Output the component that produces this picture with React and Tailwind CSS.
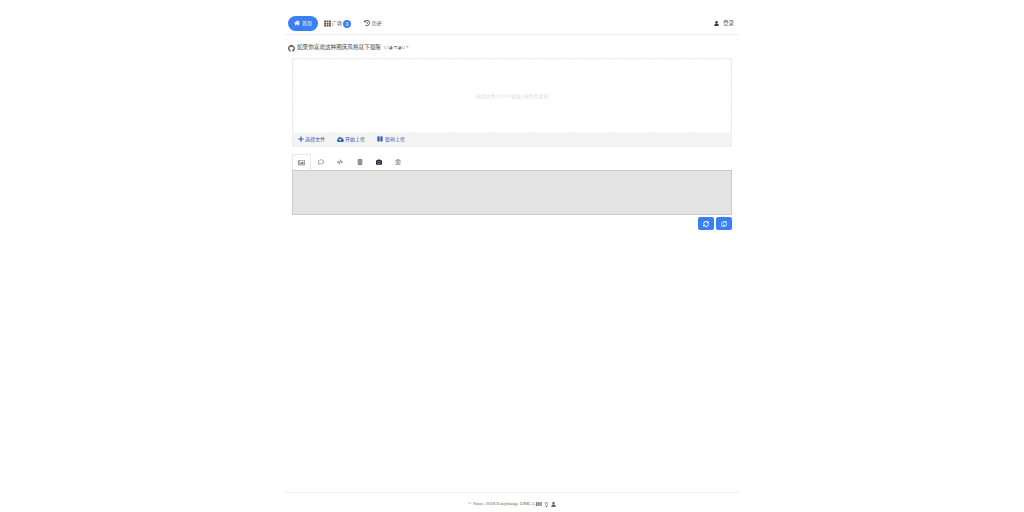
import React from 'react';
import { FaHome, FaTh, FaHistory, FaUser, FaGithub, FaPlus, FaCloudUploadAlt, FaPause, FaRegImage, FaRegComment, FaCode, FaCamera, FaRegTrashAlt, FaTrashAlt, FaSyncAlt, FaRegCopy, FaRegLightbulb, FaRegNewspaper } from 'react-icons/fa';

const tabs = [
  { icon: FaRegComment, color: 'text-gray-500' },
  { icon: FaCode, color: 'text-gray-500' },
  { icon: FaTrashAlt, color: 'text-gray-500' },
  { icon: FaCamera, color: 'text-gray-800' },
  { icon: FaRegTrashAlt, color: 'text-gray-500' },
];

export default function App() {
  return (
    <div className="w-[1024px] h-[512px] bg-white flex flex-col items-center font-['Noto_Sans_CJK_SC','Liberation_Sans',sans-serif] text-[#4a4a4a]">
      <div className="w-[456px] h-[512px] flex flex-col">
        {/* nav */}
        <div className="h-[35px] shrink-0 border-b border-[#f0f0f0] pt-4 px-1 flex items-start justify-between">
          <div className="flex items-center text-[5px] h-[15px]">
            <div className="w-[30px] h-[15px] pb-[1px] rounded-full bg-[#3b7ff5] text-white flex items-center justify-center gap-[2px]">
              <FaHome className="text-[6px]" />
              <span>首页</span>
            </div>
            <div className="ml-[6px] pb-[1px] flex items-center gap-[1px]">
              <FaTh className="text-[7px] text-[#6b5a45]" />
              <span>广场</span>
              <span className="w-[8px] h-[8px] mt-[1px] rounded-full bg-[#3b7ff5] text-white text-[5px] leading-none flex items-center justify-center">6</span>
            </div>
            <div className="ml-[13px] pb-[1px] flex items-center gap-[2px]">
              <FaHistory className="text-[6px] text-[#4a4a4a]" />
              <span>历史</span>
            </div>
          </div>
          <div className="flex items-center gap-[3px] text-[5.5px] h-[15px] mr-[2px]">
            <FaUser className="text-[5px] text-[#363636]" />
            <span className="ml-[1px]">登录</span>
          </div>
        </div>

        {/* notice */}
        <div className="mt-[8px] px-1 h-[10px] flex items-center gap-[2px] text-[5.6px] text-[#4a4a4a] leading-none">
          <FaGithub className="text-[7px]" />
          <span>如果你喜欢这种图床风格就下载喔</span>
          <span className="ml-[1px] text-[#777] font-['DejaVu_Sans',sans-serif] text-[4.5px]">(ﾉ◕ヮ◕)ﾉ*</span>
        </div>

        {/* uploader */}
        <div className="mt-[5px] mx-2 w-[440px] border border-[#ececec] flex flex-col">
          <div className="h-[74px] border border-dashed border-[#f6f6f6] flex items-center justify-center text-[5px] text-[#dcdcdc]">
            选择文件/Ctrl+V粘贴/拖拽至此处
          </div>
          <div className="h-[13px] pb-[1px] bg-[#f3f3f3] flex items-center pl-[5px] text-[5px] text-[#2f5fb3]">
            <div className="flex items-center gap-[1px]">
              <FaPlus className="text-[6px]" />
              <span>选择文件</span>
            </div>
            <div className="ml-[12px] flex items-center gap-[1px]">
              <FaCloudUploadAlt className="text-[7px]" />
              <span>开始上传</span>
            </div>
            <div className="ml-[12px] flex items-center gap-[2px]">
              <FaPause className="text-[6px]" />
              <span>暂停上传</span>
            </div>
          </div>
        </div>

        {/* tabs */}
        <div className="mt-[7px] mx-2 h-[16px] flex items-stretch">
          <div className="w-[19px] border-t border-l border-r border-[#e8e8e8] flex items-center justify-center text-gray-500">
            <FaRegImage className="text-[7px]" />
          </div>
          <div className="flex items-center ml-[7px] gap-[13.3px]">
            {tabs.map((t, i) => {
              const Icon = t.icon;
              return <Icon key={i} className={`text-[6px] ${t.color}`} />;
            })}
          </div>
        </div>

        {/* output */}
        <div className="mx-2 w-[440px] h-[45px] bg-[#e3e3e3] border border-[#c9c9c9]"></div>
        <div className="mx-2 w-[440px] mt-[2px] flex justify-end gap-[2px]">
          <div className="w-[16px] h-[13px] rounded-[2px] bg-[#3b7ff5] flex items-center justify-center text-white">
            <FaSyncAlt className="text-[6px]" />
          </div>
          <div className="w-[16px] h-[13px] rounded-[2px] bg-[#3b7ff5] flex items-center justify-center text-white">
            <FaRegCopy className="text-[6px]" />
          </div>
        </div>

        {/* footer */}
        <div className="mt-auto h-[20px] pt-[3px] border-t border-[#f0f0f0] flex items-center justify-center gap-[1px] text-[5px] text-[#666] font-['Liberation_Serif',serif]">
          <span>© Since 2018 EasyImage DMCA</span>
          <FaRegNewspaper className="text-[6px]" />
          <FaRegLightbulb className="text-[5px] ml-[1px]" />
          <FaUser className="text-[5px] ml-[1px]" />
        </div>
      </div>
    </div>
  );
}
